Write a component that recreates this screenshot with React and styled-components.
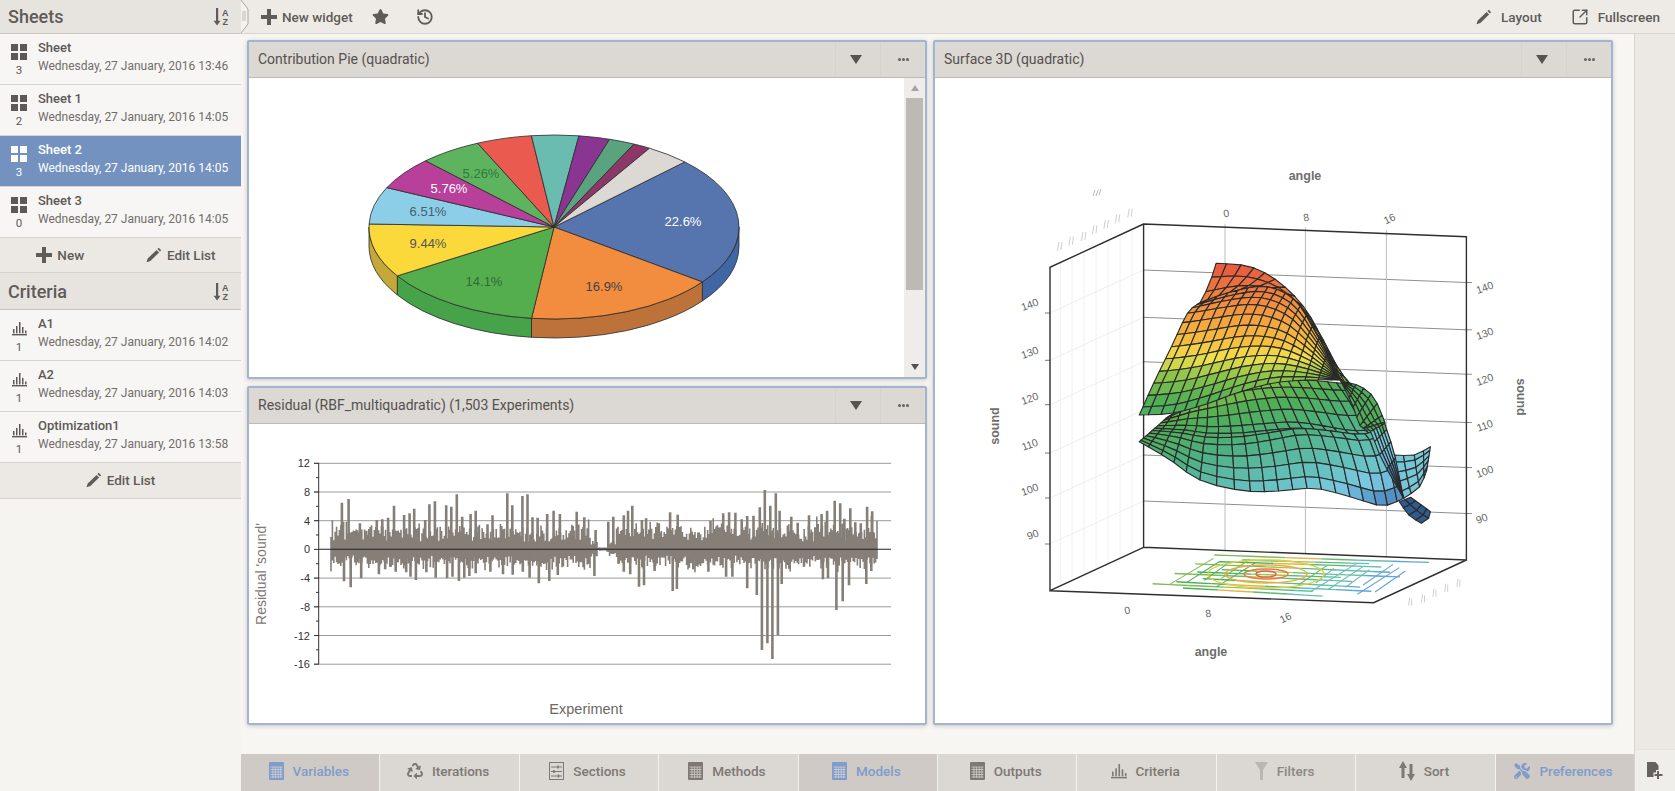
import React from 'react';
import styled, { createGlobalStyle } from 'styled-components';
import { History, SquareArrowOutUpRight } from 'lucide-react';
import { FaStar, FaRecycle, FaTools } from 'react-icons/fa';

const GlobalStyle = createGlobalStyle`
  html, body { margin: 0; height: 100%; overflow: hidden; }
  body { font-family: Roboto, "Liberation Sans", sans-serif; color: #5d5956; background: #f8f6f3; }
`;

const Page = styled.div`
  display: flex;
  width: 1675px;
  height: 791px;
`;

/* ---- sidebar ---- */
const Sidebar = styled.aside`
  width: 241px;
  flex: none;
  background: #f6f4f1;
`;

const SectionHead = styled.header`
  display: flex;
  align-items: center;
  justify-content: space-between;
  box-sizing: border-box;
  height: ${p => p.$h}px;
  padding: 0 10px 0 8px;
  background: #e7e4e0;
  border-bottom: 1px solid #c9c6c2;
  font-size: 18px;
  font-weight: 500;
  color: #5f5b58;
`;

const Row = styled.div`
  display: grid;
  grid-template-columns: 38px 1fr;
  box-sizing: border-box;
  height: 51px;
  background: ${p => (p.$active ? '#7492c0' : '#f8f6f4')};
  color: ${p => (p.$active ? '#fff' : '#5d5956')};
  border-bottom: 1px solid #d6d3cf;
`;

const RowIcon = styled.div`
  display: flex;
  flex-direction: column;
  align-items: center;
  padding-top: ${p => p.$top}px;
  font-size: 11.5px;
  line-height: 13px;
  svg { display: block; margin-bottom: ${p => p.$gap}px; }
`;

const RowText = styled.div`
  display: flex;
  flex-direction: column;
  padding-top: 5px;
`;

const RowTitle = styled.div`
  font-size: 13px;
  font-weight: 500;
  line-height: 17px;
`;

const RowDate = styled.div`
  font-size: 12px;
  line-height: 21px;
  white-space: nowrap;
  color: ${p => (p.$active ? '#fff' : '#716d69')};
`;

const SideFooter = styled.div`
  display: grid;
  grid-template-columns: repeat(${p => p.$cols}, 1fr);
  box-sizing: border-box;
  height: ${p => p.$h}px;
  padding-bottom: 1px;
  background: #ecE9e5;
  border-bottom: 1px solid #d6d3cf;
`;

const ActionButton = styled.button`
  display: flex;
  align-items: center;
  justify-content: center;
  gap: ${p => p.$gap || 5}px;
  padding: 0;
  border: 0;
  background: none;
  font: 500 13.5px Roboto, sans-serif;
  color: #5f5b58;
`;

/* ---- toolbar ---- */
const Main = styled.div`
  display: flex;
  flex-direction: column;
  flex: 1;
  min-width: 0;
`;

const Toolbar = styled.div`
  display: flex;
  align-items: center;
  box-sizing: border-box;
  height: 34px;
  flex: none;
  padding-right: 15px;
  background: #eeebe7;
  border-bottom: 1px solid #d8d5d1;
`;

const Splitter = styled.svg`
  width: 9px;
  height: 33px;
  flex: none;
  margin-right: 11px;
`;

const ToolButton = styled(ActionButton)`
  margin-right: ${p => p.$after || 0}px;
  svg { flex: none; }
`;

const ToolSpacer = styled.div`
  flex: 1;
`;

/* ---- workspace ---- */
const Body = styled.div`
  display: flex;
  flex: 1;
  min-height: 0;
`;

const Stage = styled.div`
  display: flex;
  flex-direction: column;
  flex: 1;
  min-width: 0;
`;

const Widgets = styled.div`
  display: grid;
  grid-template-columns: 680px 680px;
  grid-template-rows: 339px 339px;
  gap: 7px 6px;
  flex: 1;
  padding: 6px 21px 29px 6px;
  background: #f8f6f3;
`;

const Widget = styled.section`
  display: flex;
  flex-direction: column;
  grid-row: ${p => p.$rows || 'auto'};
  grid-column: ${p => p.$col || 'auto'};
  min-height: 0;
  background: #fff;
  border: 2px solid #a3b4d3;
  border-radius: 2px;
  box-shadow: 0 1px 4px rgba(60, 60, 60, .25);
`;

const WidgetHead = styled.header`
  display: flex;
  align-items: stretch;
  box-sizing: border-box;
  height: 36px;
  flex: none;
  background: #dcd8d4;
  border-bottom: 1px solid #bdb9b5;
`;

const WidgetTitle = styled.div`
  flex: 1;
  align-self: center;
  padding: 0 0 2px 9px;
  font-size: 14px;
  color: #55514e;
`;

const HeadCell = styled.div`
  display: flex;
  align-items: center;
  justify-content: center;
  width: 45px;
  padding-right: ${p => p.$shift || 0}px;
  box-sizing: border-box;
  border-left: 1px solid #d6d2ce;
`;

const Triangle = styled.div`
  width: 0;
  height: 0;
  border-left: ${p => p.$size}px solid transparent;
  border-right: ${p => p.$size}px solid transparent;
  border-top: ${p => p.$size * 1.6}px solid ${p => p.$color};
`;

const UpTriangle = styled(Triangle)`
  border-top: 0;
  border-bottom: ${p => p.$size * 1.6}px solid ${p => p.$color};
`;

const Dot = styled.span`
  width: 3px;
  height: 3px;
  margin: 0 .5px;
  border-radius: 50%;
  background: #66625f;
`;

const WidgetBody = styled.div`
  display: flex;
  flex: 1;
  min-height: 0;
`;

const ChartSvg = styled.svg`
  display: block;
  flex: 1;
  min-width: 0;
  height: 100%;
`;

const ScrollBar = styled.div`
  display: flex;
  flex-direction: column;
  align-items: center;
  width: 21px;
  flex: none;
  background: #efedea;
`;

const ScrollArrow = styled.div`
  display: flex;
  align-items: center;
  justify-content: center;
  height: 20px;
  flex: none;
`;

const ScrollThumb = styled.div`
  width: 17px;
  height: 192px;
  flex: none;
  background: #bdb9b3;
`;

const ScrollTrack = styled.div`
  flex: 1;
`;

/* ---- bottom tabs ---- */
const Tabs = styled.nav`
  display: flex;
  height: 37px;
  flex: none;
  background: #dbd7d3;
`;

const Tab = styled.div`
  display: flex;
  align-items: center;
  justify-content: center;
  gap: 9px;
  flex: 1 1 0;
  box-sizing: border-box;
  padding: 0 3px 3px 0;
  font-size: 13.5px;
  font-weight: 500;
  white-space: nowrap;
  background: ${p => (p.$active ? '#cfcac5' : '#dbd7d3')};
  color: ${p => (p.$active ? '#7f9ccb' : p.$dim ? '#8c8883' : '#7d7873')};
  border-right: 1px solid #f3f1ee;
  &:last-child { border-right: 0; }
`;

const Rail = styled.div`
  display: flex;
  flex-direction: column;
  justify-content: flex-end;
  width: 41px;
  flex: none;
  box-sizing: border-box;
  background: #ece9e5;
  border-left: 1px solid #d8d5d1;
`;

const RailButton = styled.div`
  display: flex;
  align-items: center;
  justify-content: center;
  height: 41px;
  border-top: 1px solid #e6e3df;
  background: #f0eeeb;
`;

/* ---- small drawn icons ---- */
const GridIcon = () => (
  <svg width="16" height="16" viewBox="0 0 16 16" fill="currentColor">
    <rect x="0" y="0" width="7" height="7" /><rect x="9" y="0" width="7" height="7" />
    <rect x="0" y="9" width="7" height="7" /><rect x="9" y="9" width="7" height="7" />
  </svg>
);

const BarsIcon = ({ size = 15 }) => (
  <svg width={size} height={size} viewBox="0 0 15 15" fill="currentColor">
    <rect x="0" y="13" width="15" height="1.4" />
    <rect x="1" y="8" width="1.5" height="4.4" /><rect x="4" y="5" width="1.5" height="7.4" />
    <rect x="7" y="1" width="1.5" height="11.4" /><rect x="10" y="6" width="1.5" height="6.4" />
    <rect x="13" y="9.5" width="1.5" height="2.9" />
  </svg>
);

const PlusIcon = () => (
  <svg width="16" height="16" viewBox="0 0 16 16" fill="currentColor">
    <path d="M6 0h4v6h6v4h-6v6H6v-6H0V6h6z" />
  </svg>
);

const PencilIcon = () => (
  <svg width="16" height="16" viewBox="0 0 16 16" fill="currentColor">
    <path d="M12.700.8l2.500 2.500-1.300 1.300-2.500-2.500zM10.600 2.900l2.500 2.500-8.700 8.700-3.900 1.100 1.200-3.800z" />
  </svg>
);

const SortIcon = () => (
  <svg width="18" height="19" viewBox="0 0 18 19" fill="#5f5b58">
    <path d="M3 1h2.200v12.800h2.300L4.100 18.500.6 13.800H3z" />
    <text x="9" y="8.500" fontSize="9" fontWeight="700" fontFamily="Liberation Sans">A</text>
    <text x="9.400" y="17.800" fontSize="9" fontWeight="700" fontFamily="Liberation Sans">Z</text>
  </svg>
);

const TableIcon = () => (
  <svg width="15" height="18" viewBox="0 0 15 18">
    <rect width="15" height="18" rx="1" fill="currentColor" />
    <path d="M1.500 5h12M1.500 7.500h12M1.500 10h12M1.500 12.500h12M1.500 15h12M4 5v11M6.600 5v11M9.200 5v11M11.800 5v11" stroke="#dbd7d3" strokeWidth=".7" />
  </svg>
);

const SlidersIcon = () => (
  <svg width="15" height="18" viewBox="0 0 15 18" fill="none" stroke="currentColor">
    <rect x=".5" y=".5" width="14" height="17" />
    <path d="M2 5h11M2 9.500h11M2 14h11" />
    <path d="M9 3.500v3M5 8v3M9.500 12.500v3" strokeWidth="1.600" />
  </svg>
);

const FunnelIcon = () => (
  <svg width="13" height="18" viewBox="0 0 13 18" fill="#bab6b2">
    <path d="M0 0h13L8 8v10H5V8z" />
  </svg>
);

const UpDownIcon = () => (
  <svg width="16" height="20" viewBox="0 0 16 20" fill="currentColor">
    <path d="M4 0l4 7H5.500v10h-3V7H0zM12 20l-4-7h2.500V3h3v10H16z" />
  </svg>
);

const NewDocIcon = () => (
  <svg width="16" height="17" viewBox="0 0 16 17" fill="#66625f">
    <path d="M0 0h8.500l3 3.500V8H9v2.500H6.500V15H0z" />
    <path d="M10 9h2v3h3.500v2H12v3h-2v-3H7.500v-2H10z" />
  </svg>
);

/* ---- pie chart ---- */
const PIE = { cx: 554, cy: 227, rx: 185, ry: 92, depth: 19 };

const pieBounds = [
  [392, -195, '#5674ad', '#3f66a5'], [448, 166, '#f28c3f', '#bd723a'], [-68, 276, '#55ae4d', '#47a34a'],
  [-468, 146, '#fbd93a', '#c4a93a'], [-552, -9, '#8ccde8'], [-497, -117, '#b9409a'], [-382, -197, '#5eb35f'],
  [-230, -252, '#ea5a4e'], [-68, -275, '#6bbcb0'], [75, -274, '#8a3591'], [166, -262, '#5aa37f'],
  [240, -249, '#8b3768'], [285, -235, '#dcd9d4'],
];

const pieLabels = [
  ['22.6%', 683, 226, '#fff'], ['16.9%', 604, 291, '#444'], ['14.1%', 484, 286, '#2f6a38'], ['9.44%', 428, 248, '#555'],
  ['6.51%', 428, 216, '#47606a'], ['5.76%', 449, 193, '#fff'], ['5.26%', 481, 178, '#2f7a3c'],
];

const piePoint = t => [PIE.cx + PIE.rx * Math.cos(t), PIE.cy + PIE.ry * Math.sin(t)];

const PieChart = () => {
  const angles = pieBounds.map(b => Math.atan2(b[1] / 276, b[0] / 555));
  const slices = pieBounds.map((b, i) => {
    const start = angles[i];
    let end = angles[(i + 1) % angles.length];
    if (end < start) end += Math.PI * 2;
    return { start, end, fill: b[2], side: b[3] };
  });
  return (
    <ChartSvg viewBox="249 78 655 299" preserveAspectRatio="xMinYMin meet">
      {slices.filter(s => s.side).map((s, i) => {
        const a = Math.max(s.start, 0);
        const b = Math.min(s.end, Math.PI);
        const [x1, y1] = piePoint(a);
        const [x2, y2] = piePoint(b);
        return (
          <path
            key={i}
            d={`M${x1} ${y1}A${PIE.rx} ${PIE.ry} 0 0 1 ${x2} ${y2}v${PIE.depth}A${PIE.rx} ${PIE.ry} 0 0 0 ${x1} ${y1 + PIE.depth}Z`}
            fill={s.side}
            stroke="#2a2a2a"
            strokeWidth=".8"
          />
        );
      })}
      {slices.map((s, i) => {
        const [x1, y1] = piePoint(s.start);
        const [x2, y2] = piePoint(s.end);
        return (
          <path
            key={i}
            d={`M${PIE.cx} ${PIE.cy}L${x1} ${y1}A${PIE.rx} ${PIE.ry} 0 0 1 ${x2} ${y2}Z`}
            fill={s.fill}
            stroke="#2a2a2a"
            strokeWidth=".8"
          />
        );
      })}
      {pieLabels.map(l => (
        <text key={l[0]} x={l[1]} y={l[2]} textAnchor="middle" fontSize="13" fontFamily="Liberation Sans" fill={l[3]}>
          {l[0]}
        </text>
      ))}
    </ChartSvg>
  );
};

/* ---- residual chart, spike tips are read off the picture in crop coordinates ---- */
const upTips = [[242,188],[258,177],[285,250],[300,272],[325,240],[338,238],[352,233],[366,197],[390,225],[403,220],[414,206],[440,240],[450,193],[463,184],[490,196],[502,200],[515,163],[528,230],[548,222],[560,212],[588,253],[600,226],[635,160],[647,196],[671,168],[683,163],[695,232],[707,233],[730,222],[745,212],[760,222],[800,215],[818,232],[845,270],[875,245],[887,230],[912,226],[922,212],[932,197],[955,240],[965,235],[995,250],[1022,217],[1040,224],[1118,242],[1148,220],[1162,217],[1177,218],[1192,238],[1205,228],[1220,227],[1235,202],[1247,150],[1260,197],[1273,160],[1282,212],[1310,230],[1325,248],[1352,226],[1367,262],[1382,222],[1395,212],[1413,182],[1426,190],[1436,236],[1450,205],[1462,247],[1475,250],[1490,200],[1502,214]];
const downTips = [[247,424],[263,442],[288,415],[330,403],[345,388],[370,395],[395,397],[405,410],[418,420],[443,397],[465,413],[492,415],[505,410],[520,423],[533,413],[545,408],[560,400],[595,395],[625,403],[648,404],[672,395],[688,413],[710,430],[735,423],[755,405],[842,408],[912,395],[927,403],[948,440],[960,436],[985,393],[1028,453],[1038,447],[1077,388],[1113,395],[1155,410],[1170,410],[1205,445],[1228,465],[1240,630],[1253,610],[1265,657],[1278,585],[1287,432],[1340,380],[1385,418],[1397,415],[1417,510],[1432,484],[1447,436],[1488,432],[1500,393]];

const cropX = x => 240 + x / 2.376;
const cropY = y => 440 + y / 3;
const ZERO = 549.3;

const residualCore = () => {
  let seed = 41;
  const rnd = () => {
    seed = (seed * 16807) % 2147483647;
    return seed / 2147483647;
  };
  let d = '';
  for (let x = 331; x < 878; x += 1.4) {
    const quiet = x > 598 && x < 608 ? 0.1 : x > 590 && x < 616 ? 0.4 : 1;
    const up = (7 + rnd() * 13 + rnd() * rnd() * 14) * quiet;
    const down = (6 + rnd() * 8 + rnd() * rnd() * 12) * quiet;
    d += `M${x.toFixed(1)} ${(ZERO - up).toFixed(1)}V${(ZERO + down).toFixed(1)}`;
  }
  return d;
};

const axisTicks = [12, 8, 4, 0, -4, -8, -12, -16];

const ResidualChart = () => {
  const spikes = [...upTips, ...downTips].map(([x, y]) => `M${cropX(x).toFixed(1)} ${ZERO}V${cropY(y).toFixed(1)}`).join('');
  return (
    <ChartSvg viewBox="249 424 676 299" preserveAspectRatio="xMinYMin meet">
      {axisTicks.map((v, i) => {
        const y = 463.3 + i * 28.7;
        return (
          <g key={v}>
            <path d={`M314 ${y}H891`} stroke={v === 0 ? 'none' : '#9a9a98'} fill="none" />
            <path d={v === -16 ? `M314 ${y}H319` : `M314 ${y}H319M316 ${y + 14.3}H319`} stroke="#333" fill="none" />
            <text x="310" y={y + 4} textAnchor="end" fontSize="11" fontFamily="Liberation Sans" fill="#333">{v}</text>
          </g>
        );
      })}
      <path d="M318.700 463V664" stroke="#333" fill="none" />
      <path d={residualCore()} stroke="#857f78" strokeWidth="1.600" fill="none" />
      <path d={spikes} stroke="#857f78" strokeWidth="2.600" fill="none" />
      <path d={`M319 ${ZERO}H891`} stroke="#222" strokeWidth="1.100" fill="none" />
      <text transform="translate(266 574) rotate(-90)" textAnchor="middle" fontSize="14" fontFamily="Liberation Sans" fill="#7d7873">Residual 'sound'</text>
      <text x="586" y="714" textAnchor="middle" fontSize="14.500" fontFamily="Liberation Sans" fill="#6c6864">Experiment</text>
    </ChartSvg>
  );
};

/* ---- surface 3d ---- */
const z5 = (x, y) => [1000 + x / 2.8, 150 + y / 3];
const z6 = (x, y) => [1000 + x / 2.8, 420 + y / 3];
const pts5 = list => list.map(([x, y]) => z5(x, y));
const pts6 = list => list.map(([x, y]) => z6(x, y));

const curve = pts => t => {
  if (pts.length === 1) return pts[0];
  const n = pts.length - 1;
  const s = Math.min(t * n, n - 1e-6);
  const i = Math.floor(s);
  const f = s - i;
  const p0 = pts[Math.max(i - 1, 0)];
  const p1 = pts[i];
  const p2 = pts[i + 1];
  const p3 = pts[Math.min(i + 2, n)];
  return [0, 1].map(k => 0.5 * (2 * p1[k] + (p2[k] - p0[k]) * f + (2 * p0[k] - 5 * p1[k] + 4 * p2[k] - p3[k]) * f * f + (3 * p1[k] - p0[k] - 3 * p2[k] + p3[k]) * f * f * f));
};

const mix = (a, b, t) => a.map((v, i) => Math.round(v + (b[i] - v) * t));

const hot = [[263,[232,84,63]],[300,[240,136,63]],[342,[246,192,63]],[358,[240,224,74]],[376,[140,196,74]],[402,[79,174,84]],[440,[78,176,130]],[480,[100,192,186]],[505,[122,200,224]],[522,[92,159,208]],[545,[47,91,142]]];

const heat = v => {
  if (v <= hot[0][0]) return `rgb(${hot[0][1]})`;
  for (let i = 1; i < hot.length; i += 1) {
    if (v <= hot[i][0]) {
      return `rgb(${mix(hot[i - 1][1], hot[i][1], (v - hot[i - 1][0]) / (hot[i][0] - hot[i - 1][0]))})`;
    }
  }
  return `rgb(${hot[hot.length - 1][1]})`;
};

const patchCells = ({ top, bottom, left, right, nu, nv, tone }) => {
  const T = curve(top);
  const B = curve(bottom);
  const L = curve(left);
  const R = curve(right);
  const P = (u, v) => [0, 1].map(k => (
    (1 - v) * T(u)[k] + v * B(u)[k] + (1 - u) * L(v)[k] + u * R(v)[k]
    - ((1 - u) * (1 - v) * T(0)[k] + u * (1 - v) * T(1)[k] + (1 - u) * v * B(0)[k] + u * v * B(1)[k])
  ));
  const cells = [];
  for (let j = 0; j < nv; j += 1) {
    for (let i = 0; i < nu; i += 1) {
      const c = [P(i / nu, j / nv), P((i + 1) / nu, j / nv), P((i + 1) / nu, (j + 1) / nv), P(i / nu, (j + 1) / nv)];
      const mx = c.reduce((s, p) => s + p[0], 0) / 4;
      const my = c.reduce((s, p) => s + p[1], 0) / 4;
      cells.push({ d: `M${c.map(p => `${p[0].toFixed(1)} ${p[1].toFixed(1)}`).join('L')}Z`, fill: heat(tone ? tone(mx, my) : my) });
    }
  }
  return cells;
};

const foldEdge = [[560,458],[650,425],[745,410],[825,450],[885,550],[955,690]];

const surfacePatches = [
  {
    top: pts5([[470,800],[560,745],[650,705],[750,690],[860,690],[960,700]]),
    bottom: pts6([[390,65],[470,115],[560,180],[680,212],[780,213],[880,205],[980,230],[1070,257],[1130,235]]),
    left: pts5([[470,800],[430,838],[390,875]]),
    right: pts5([[960,700],[1000,760],[1050,850]]).concat(pts6([[1075,30],[1110,130],[1130,235]])),
    nu: 20,
    nv: 11,
    tone: (x, y) => y + (x - 1210) * 0.25 - 15,
  },
  {
    top: pts6([[1105,105],[1160,105],[1205,80]]),
    bottom: pts6([[1130,235],[1175,200],[1195,150]]),
    left: pts6([[1105,105],[1115,170],[1130,235]]),
    right: pts6([[1205,80],[1200,115],[1195,150]]),
    nu: 4,
    nv: 5,
    tone: () => 500,
  },
  {
    top: pts6([[1150,232],[1180,255],[1205,275]]),
    bottom: pts6([[1118,245],[1145,285],[1180,310]]),
    left: pts6([[1150,232],[1118,245]]),
    right: pts6([[1205,275],[1200,295],[1180,310]]),
    nu: 4,
    nv: 2,
    tone: () => 545,
  },
  {
    top: pts5([[955,695],[1000,705],[1045,740],[1075,810]]).concat(pts6([[1080,20],[1105,105],[1130,235]])),
    bottom: pts5([[955,695],[985,760],[1010,830]]).concat(pts6([[1035,30],[1070,120],[1130,235]])),
    left: pts5([[955,695]]),
    right: pts6([[1130,235]]),
    nu: 13,
    nv: 5,
    tone: (x, y) => (y < 430 ? 405 : y + 55),
  },
  {
    top: pts5([[605,340],[700,350],[780,395],[850,470],[900,560],[950,660],[985,705]]),
    bottom: pts5(foldEdge),
    left: pts5([[605,340],[585,405],[560,458]]),
    right: pts5([[985,705],[955,690]]),
    nu: 16,
    nv: 3,
  },
  {
    top: pts5(foldEdge),
    bottom: pts5([[390,795],[480,790],[570,765],[660,730],[760,700],[860,690],[955,690]]),
    left: pts5([[560,458],[525,490],[480,590],[430,700],[390,795]]),
    right: pts5([[955,690]]),
    nu: 17,
    nv: 12,
  },
];

const wallRows = [270, 317.3, 361.7, 410, 455, 501];

const floorPoint = (u, v) => {
  const a = z6(600, 405);
  const b = z6(1205, 425);
  const c = z6(410, 500);
  const d = z6(1000, 535);
  return [0, 1].map(k => (1 - v) * ((1 - u) * a[k] + u * b[k]) + v * ((1 - u) * c[k] + u * d[k]));
};

const contourTone = (u, r) => {
  if (u < 0.3) return r % 3 === 0 ? '#7dbb52' : '#4fae5c';
  if (u < 0.5) return r % 2 === 0 ? '#e2b544' : '#9cc44e';
  if (u < 0.62) return '#5fb878';
  if (u < 0.82) return '#67bfae';
  return '#5fa6d4';
};

const FloorContours = () => {
  const parts = [];
  for (let r = 0; r < 11; r += 1) {
    const v = r / 10;
    const from = (r * 5) % 3;
    const to = 12 - ((r * 7) % 4);
    for (let s = from; s < to; s += 1) {
      const wave = t => Math.sin(t * 19 + r * 1.7) * 0.02;
      const a = floorPoint(s / 12, Math.max(v + wave(s), 0));
      const b = floorPoint((s + 1) / 12, Math.max(v + wave(s + 1), 0));
      parts.push(<path key={`h${r}-${s}`} d={`M${a[0]} ${a[1]}L${b[0]} ${b[1]}`} stroke={contourTone(s / 12, r)} strokeWidth="1.400" fill="none" />);
    }
  }
  for (let s = 0; s < 18; s += 1) {
    const u = (s + 0.5) / 18;
    if (u < 0.3 || u > 0.55) {
      const a = floorPoint(u, 0.1 + (s % 3) * 0.08);
      const b = floorPoint(u + 0.05, 0.9 - (s % 4) * 0.08);
      parts.push(<path key={`c${s}`} d={`M${a[0]} ${a[1]}L${b[0]} ${b[1]}`} stroke={contourTone(u, s)} strokeWidth="1.100" fill="none" />);
    }
  }
  return <g>{parts}</g>;
};

const sideLabels = [['140', 1031, 308], ['130', 1031, 356], ['120', 1031, 402], ['110', 1031, 448], ['100', 1031, 493], ['90', 1034, 538]];
const rightLabels = [['140', 1486, 291], ['130', 1486, 337], ['120', 1486, 383], ['110', 1486, 429], ['100', 1486, 475], ['90', 1483, 522]];
const topLabels = [['0', 1227, 217, -10], ['8', 1307, 221, -10], ['16', 1391, 222, -25]];
const bottomLabels = [['0', 1128, 614, -10], ['8', 1209, 617, -10], ['16', 1287, 621, -25]];
const wallMarks = [[165,288],[197,272],[232,258],[263,238],[295,222],[327,205],[362,188]];
const floorMarks = [[1147,545],[1183,535],[1215,518],[1248,503],[1282,488]];

const SurfaceChart = () => {
  const cellsByPatch = surfacePatches.map(patchCells);
  return (
    <ChartSvg viewBox="935 78 676 645" preserveAspectRatio="xMinYMin meet">
      <g fontFamily="Liberation Sans" fill="#666" fontSize="10.500">
        {wallRows.map(y => (
          <g key={y}>
            <path d={`M1143.600 ${y}L1466.400 ${y + 12.500}H1472`} stroke="#8f8f8f" fill="none" />
            <path d={`M1050 ${y + 43}L1143.600 ${y}`} stroke="#eeeeee" fill="none" />
            <path d={`M1045 ${y + 43}H1050`} stroke="#777" fill="none" />
          </g>
        ))}
        {[1060.700, 1072, 1084, 1096, 1108, 1120, 1132].map(x => (
          <path key={x} d={`M${x} ${262 - (x - 1060) * 0.46}V${586 - (x - 1060) * 0.46}`} stroke="#f0f0f0" fill="none" />
        ))}
        {[1225, 1305.400, 1386.400].map(x => (
          <path key={x} d={`M${x} ${224 + (x - 1143.600) * 0.04 - 3}V${547 + (x - 1143.600) * 0.04}`} stroke="#bcbcbc" fill="none" />
        ))}
        <path d="M1143.600 224L1466.400 236.700V560L1143.600 547.300ZM1143.600 224L1050 267.300V590.700L1143.600 547.300M1050 590.700L1373.600 602.700L1466.400 560" stroke="#2f2f2f" strokeWidth="1.400" fill="none" />
        <FloorContours />
        {[[10, 3, '#d6644a'], [22, 5, '#e07a3f'], [41, 9, '#eeaa3c'], [58, 14, '#d9cf45']].map(([rx, ry, c]) => (
          <ellipse key={rx} cx="1266" cy="574" rx={rx} ry={ry} stroke={c} strokeWidth="1.400" fill="none" />
        ))}
        {cellsByPatch.map((cells, p) => (
          <g key={p}>
            {cells.map((c, i) => <path key={i} d={c.d} fill={c.fill} stroke="#2a2a2a" strokeWidth="1.150" strokeLinejoin="round" />)}
          </g>
        ))}
        {sideLabels.concat(rightLabels).map(([t, x, y]) => (
          <text key={`${t}${x}`} transform={`translate(${x} ${y}) rotate(-20)`} textAnchor="middle">{t}</text>
        ))}
        {topLabels.concat(bottomLabels).map(([t, x, y, a]) => (
          <text key={`${t}${x}`} transform={`translate(${x} ${y}) rotate(${a})`} textAnchor="middle">{t}</text>
        ))}
        <g stroke="#cfcfcf" fill="none">
          {wallMarks.map(([x, y]) => {
            const [a, b] = z5(x, y);
            return <path key={x} d={`M${a - 1.500} ${b + 5}L${a} ${b - 4}M${a + 2} ${b + 4}L${a + 3} ${b - 4}`} />;
          })}
          {floorMarks.map(([x, y]) => {
            const [a, b] = z6(x, y);
            return <path key={x} d={`M${a - 1} ${b + 4}L${a} ${b - 4}M${a + 2} ${b + 4}L${a + 2} ${b - 3}`} />;
          })}
          <path d="M1093 196L1095 190M1096 196L1098 190M1099 195L1101 189" stroke="#bbb" />
        </g>
        <g fontSize="12.500" fontWeight="700" fill="#6e6e6e">
          <text x="1305" y="180" textAnchor="middle">angle</text>
          <text x="1211" y="656" textAnchor="middle">angle</text>
          <text transform="translate(999 426) rotate(-90)" textAnchor="middle">sound</text>
          <text transform="translate(1517 397) rotate(90)" textAnchor="middle">sound</text>
        </g>
      </g>
    </ChartSvg>
  );
};

/* ---- data ---- */
const sheets = [
  { name: 'Sheet', count: 3, date: 'Wednesday, 27 January, 2016 13:46' },
  { name: 'Sheet 1', count: 2, date: 'Wednesday, 27 January, 2016 14:05' },
  { name: 'Sheet 2', count: 3, date: 'Wednesday, 27 January, 2016 14:05', active: true },
  { name: 'Sheet 3', count: 0, date: 'Wednesday, 27 January, 2016 14:05' },
];

const criteria = [
  { name: 'A1', count: 1, date: 'Wednesday, 27 January, 2016 14:02' },
  { name: 'A2', count: 1, date: 'Wednesday, 27 January, 2016 14:03' },
  { name: 'Optimization1', count: 1, date: 'Wednesday, 27 January, 2016 13:58' },
];

const tabs = [
  { label: 'Variables', icon: <TableIcon />, active: true },
  { label: 'Iterations', icon: <FaRecycle size={16} /> },
  { label: 'Sections', icon: <SlidersIcon /> },
  { label: 'Methods', icon: <TableIcon /> },
  { label: 'Models', icon: <TableIcon />, active: true },
  { label: 'Outputs', icon: <TableIcon /> },
  { label: 'Criteria', icon: <BarsIcon size={16} /> },
  { label: 'Filters', icon: <FunnelIcon />, dim: true },
  { label: 'Sort', icon: <UpDownIcon /> },
  { label: 'Preferences', icon: <FaTools size={16} />, active: true },
];

const ListRow = ({ item, icon, top, gap }) => (
  <Row $active={item.active}>
    <RowIcon $top={top} $gap={gap}>
      {icon}
      <span>{item.count}</span>
    </RowIcon>
    <RowText>
      <RowTitle>{item.name}</RowTitle>
      <RowDate $active={item.active}>{item.date}</RowDate>
    </RowText>
  </Row>
);

const WidgetHeader = ({ title }) => (
  <WidgetHead>
    <WidgetTitle>{title}</WidgetTitle>
    <HeadCell $shift={4}><Triangle $size={6} $color="#57534f" /></HeadCell>
    <HeadCell><Dot /><Dot /><Dot /></HeadCell>
  </WidgetHead>
);

export default function App() {
  return (
    <Page>
      <GlobalStyle />
      <Sidebar>
        <SectionHead $h={34}>Sheets<SortIcon /></SectionHead>
        {sheets.map(s => <ListRow key={s.name} item={s} icon={<GridIcon />} top={10} gap={4} />)}
        <SideFooter $cols={2} $h={35}>
          <ActionButton><PlusIcon />New</ActionButton>
          <ActionButton><PencilIcon />Edit List</ActionButton>
        </SideFooter>
        <SectionHead $h={37}>Criteria<SortIcon /></SectionHead>
        {criteria.map(s => <ListRow key={s.name} item={s} icon={<BarsIcon />} top={11} gap={5} />)}
        <SideFooter $cols={1} $h={36}>
          <ActionButton><PencilIcon />Edit List</ActionButton>
        </SideFooter>
      </Sidebar>
      <Main>
        <Toolbar>
          <Splitter viewBox="0 0 9 33">
            <path d="M0 0L7 9V24L0 33" fill="#f4f2ef" stroke="#a9a6a2" />
            <path d="M2 11V21M4 11V21" stroke="#bdbab6" />
          </Splitter>
          <ToolButton $after={19}><PlusIcon />New widget</ToolButton>
          <ToolButton $after={27}><FaStar size={17} /></ToolButton>
          <ToolButton><History size={18} strokeWidth={2.4} /></ToolButton>
          <ToolSpacer />
          <ToolButton $after={29} $gap={9}><PencilIcon />Layout</ToolButton>
          <ToolButton $gap={9}><SquareArrowOutUpRight size={18} strokeWidth={2} />Fullscreen</ToolButton>
        </Toolbar>
        <Body>
          <Stage>
            <Widgets>
              <Widget>
                <WidgetHeader title="Contribution Pie (quadratic)" />
                <WidgetBody>
                  <PieChart />
                  <ScrollBar>
                    <ScrollArrow><UpTriangle $size={4} $color="#a8a4a0" /></ScrollArrow>
                    <ScrollThumb />
                    <ScrollTrack />
                    <ScrollArrow><Triangle $size={4} $color="#55514e" /></ScrollArrow>
                  </ScrollBar>
                </WidgetBody>
              </Widget>
              <Widget $rows="1 / span 2" $col="2">
                <WidgetHeader title="Surface 3D (quadratic)" />
                <WidgetBody><SurfaceChart /></WidgetBody>
              </Widget>
              <Widget>
                <WidgetHeader title="Residual (RBF_multiquadratic) (1,503 Experiments)" />
                <WidgetBody><ResidualChart /></WidgetBody>
              </Widget>
            </Widgets>
            <Tabs>
              {tabs.map(t => (
                <Tab key={t.label} $active={t.active} $dim={t.dim}>
                  {t.icon}
                  {t.label}
                </Tab>
              ))}
            </Tabs>
          </Stage>
          <Rail>
            <RailButton><NewDocIcon /></RailButton>
          </Rail>
        </Body>
      </Main>
    </Page>
  );
}
